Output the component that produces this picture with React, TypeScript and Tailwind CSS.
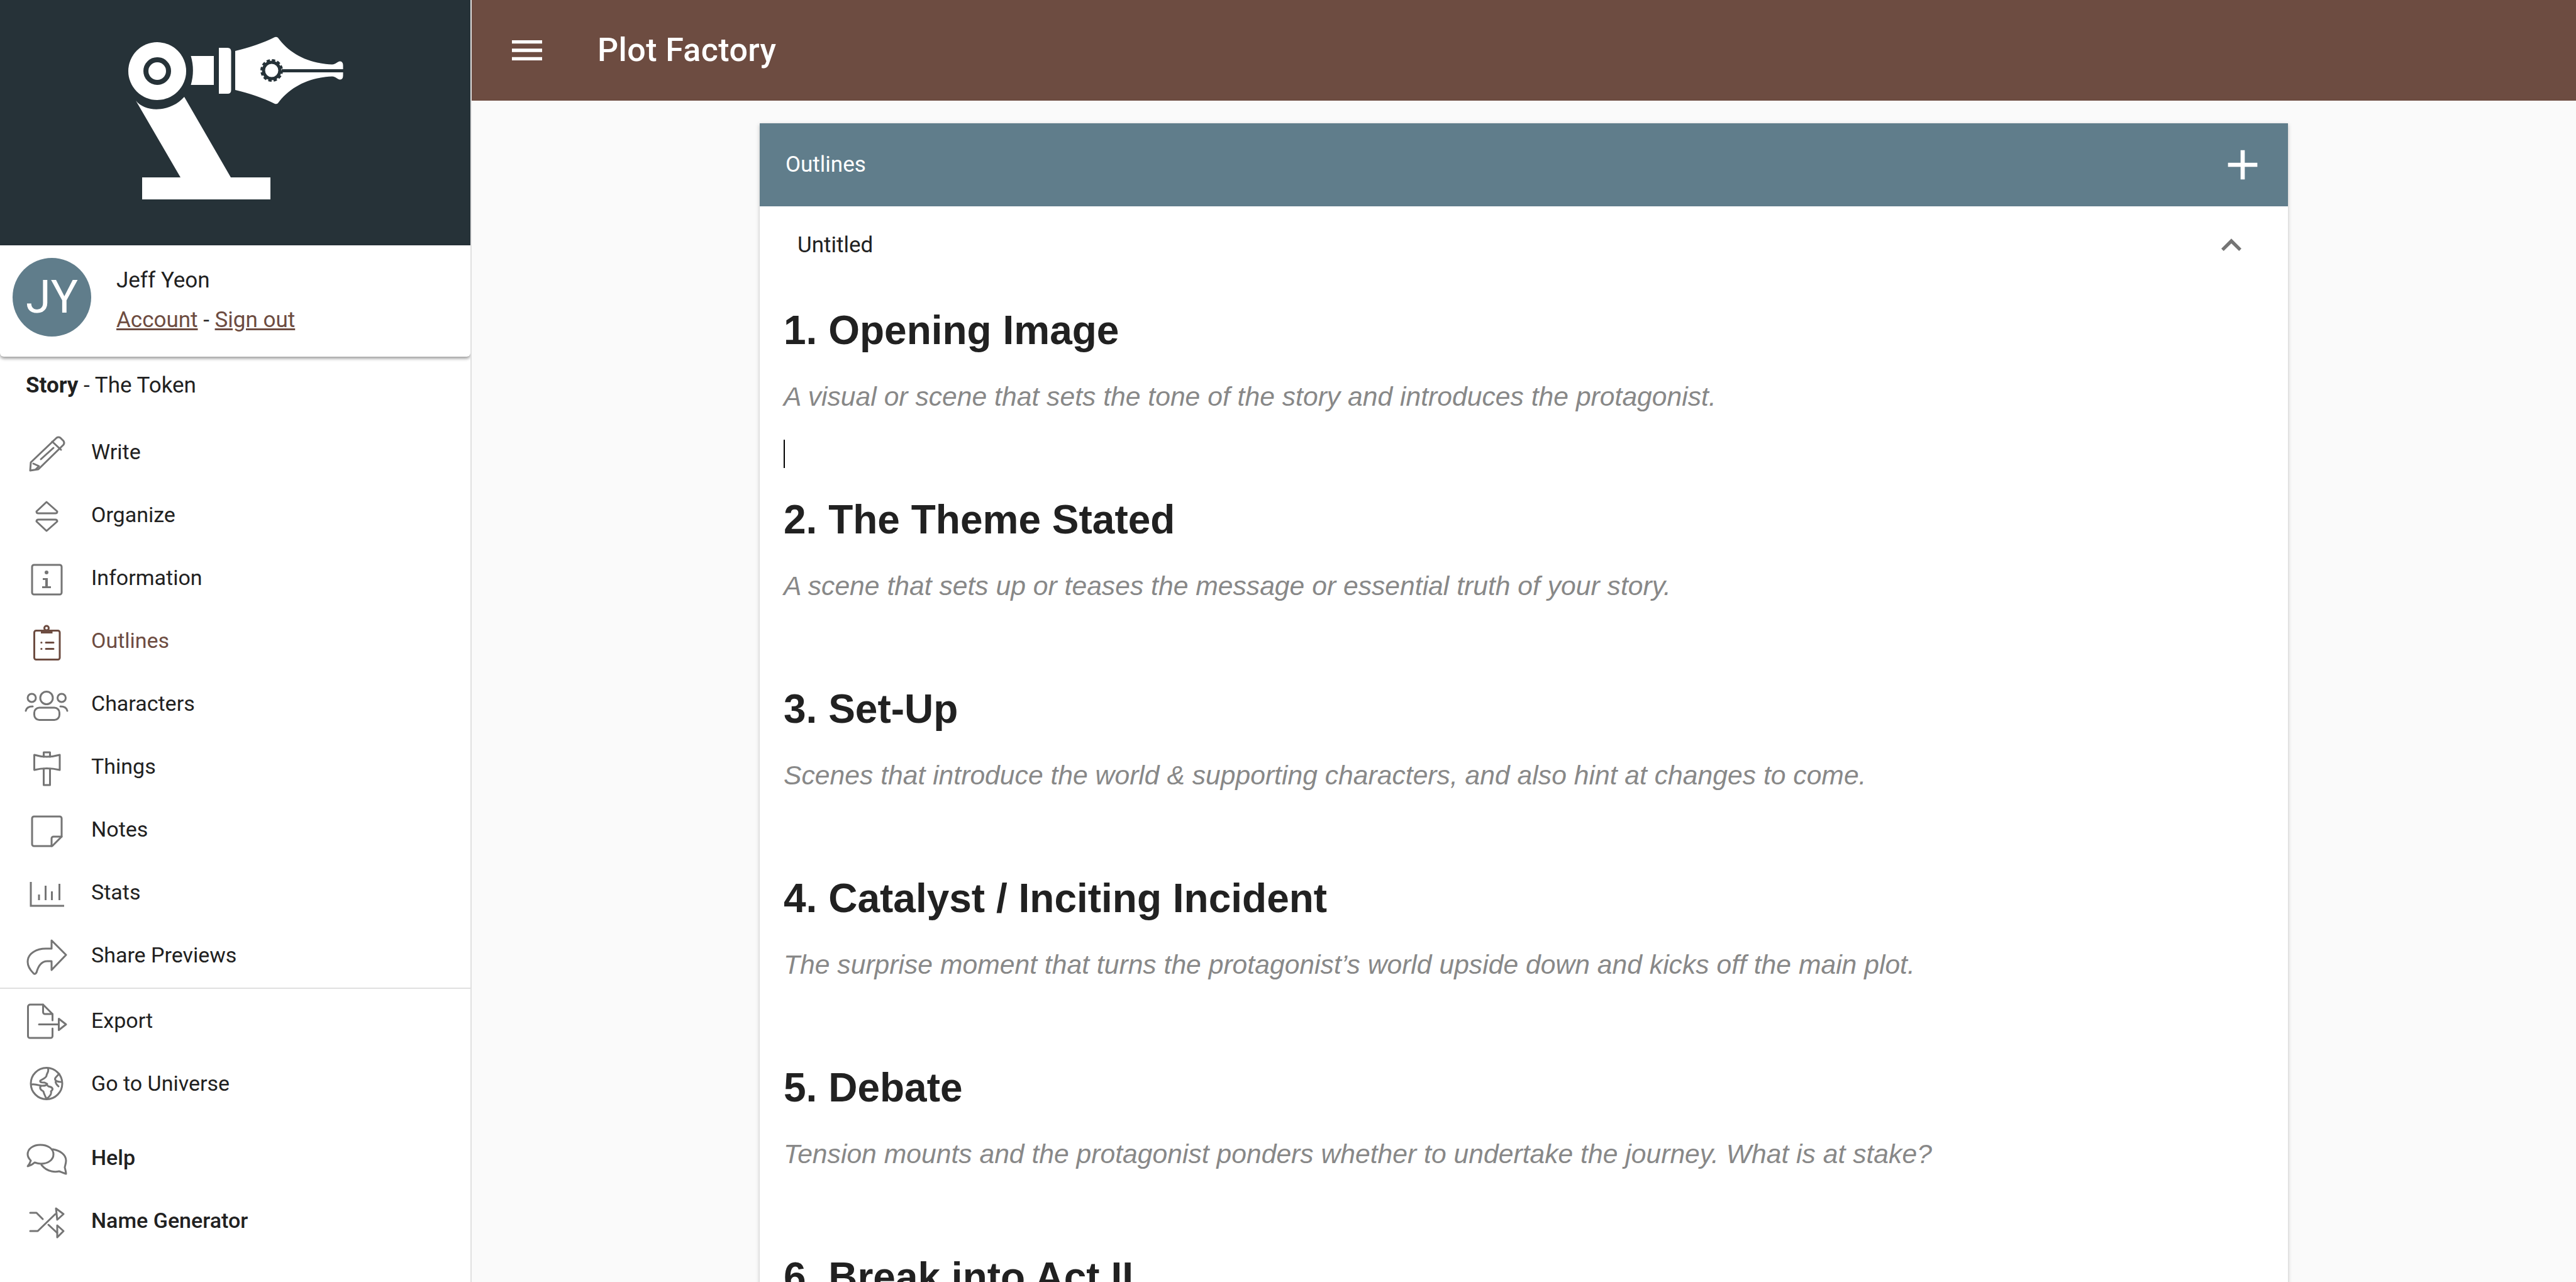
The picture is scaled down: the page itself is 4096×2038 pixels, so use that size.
import React from 'react';

const Icon = ({ children, className = 'text-[#757575]' }: { children: React.ReactNode; className?: string }) => (
  <svg
    viewBox="0 0 66 66"
    fill="none"
    stroke="currentColor"
    strokeWidth="3"
    strokeLinecap="round"
    strokeLinejoin="round"
    className={`w-[66px] h-[66px] overflow-visible shrink-0 ${className}`}
  >
    {children}
  </svg>
);

const Logo = () => (
  <svg viewBox="0 0 750 390" className="w-[750px] h-[390px] block">
    <g fill="#fff">
      <circle cx="250" cy="113" r="46" />
      <path d="M303.5 89H340V135H303.5C308 120 308 104 303.5 89Z" />
      <path d="M348 76H362Q367.500 76 367.500 82V143Q367.500 149 362 149H348Z" />
      <path d="M374 81C395 76 420 68 437 59Q440 58 442 60C460 85 490 101 528 102.500C535 102 537 97 541 97.500Q545.500 98 545.500 104V120Q545.500 126 541 126.500C537 127 535 122 528 121.500C490 123 460 139 442 164Q440 166 437 165C420 156 395 148 374 143Z" />
      <path d="M216 160C232 180 272 178 293 154L367 282H430V317H226V282H287Z" />
    </g>
    <circle cx="250" cy="113" r="18" fill="none" stroke="#263238" strokeWidth="8" />
    <path d="M448 112.500H546" stroke="#263238" strokeWidth="5" />
    <circle cx="432" cy="112" r="15.500" fill="none" stroke="#263238" strokeWidth="5" strokeDasharray="5 3.100" />
    <circle cx="432" cy="112" r="13" fill="none" stroke="#263238" strokeWidth="5" />
  </svg>
);

const icons: Record<string, React.ReactNode> = {
  write: (
    <>
      <path d="M7 63L8 50L49 11Q52 9 55 11L60 16Q62 19 60 22L20 61Z" />
      <path d="M42 17L56 30M24 45L44 27M12 52L21 56L16 61" />
    </>
  ),
  organize: <path d="M33 13L50 28Q50 31 47 31H20Q17 31 17 28ZM20 41H47Q50 41 50 44L33 59L17 44Q17 41 20 41Z" />,
  information: (
    <>
      <rect x="10" y="13" width="47" height="47" rx="3" />
      <circle cx="33" cy="25" r="3" fill="currentColor" stroke="none" />
      <path d="M27 34H35V47H40V50H26V47H31V37H27Z" fill="currentColor" stroke="none" />
    </>
  ),
  outlines: (
    <>
      <rect x="13.500" y="17.500" width="40.500" height="46" rx="3" />
      <circle cx="33" cy="13.500" r="3.500" />
      <path d="M24 19.500H42.500" strokeWidth="5" strokeLinecap="butt" />
      <path d="M32 36.500H44M32 46.500H44M24.700 36.500H25M24.700 46.500H25" />
    </>
  ),
  characters: (
    <>
      <circle cx="33" cy="24.500" r="10" />
      <circle cx="9.500" cy="24.500" r="6.500" />
      <circle cx="57" cy="24.500" r="6.500" />
      <rect x="13.500" y="40" width="40" height="19.500" rx="8" />
      <path d="M0 45C1 40 5 38 11 38M66 45C65 40 61 38 55 38" />
    </>
  ),
  things: (
    <>
      <path d="M13.500 15Q33 21 54 15V39Q33 34 13.500 39Z" />
      <path d="M28.500 18V11H38.500V18M28.500 37V63H38.500V37" />
    </>
  ),
  notes: (
    <>
      <path d="M13 13H54A3 3 0 0 1 57 16V45L42 60H13A3 3 0 0 1 10 57V16A3 3 0 0 1 13 13Z" />
      <path d="M41 60V48A3 3 0 0 1 44 45H57" />
    </>
  ),
  stats: <path d="M8 17V55H61M21 37V46M31.500 23V46M41.500 32V46M53.500 20V46" strokeLinecap="butt" strokeLinejoin="miter" />,
  share: <path d="M41 10L64 33L41 57V43H34C25 43 20 50 17 61Q14 65 12 62C8 58 3 52 3 44C3 30 18 23 32 23H41Z" />,
  export: (
    <>
      <path d="M42.500 33V23L27.500 8H7A3.500 3.500 0 0 0 3.500 11.500V58A3 3 0 0 0 7 61H39A3 3 0 0 0 42.500 58V46" />
      <path d="M27.500 8V20A3 3 0 0 0 30.500 23H42.500M21 39.500H52" />
      <path d="M52.500 30.500L64 39.500L52.500 48.500Z" />
    </>
  ),
  universe: (
    <>
      <circle cx="33" cy="33.500" r="25" />
      <path d="M35 9C38 14 33 17 33 21C32 25 27 26 23 29C22 32 26 32 30 32L34 34C32 38 28 37 24 37C20 36 15 34 9 35" />
      <path d="M24 37C21 41 24 44 28 46C29 50 31 54 33 58C38 54 42 50 40 46C45 42 42 39 36 38L33 35" />
      <path d="M53 18C49 23 44 25 48 29C51 31 57 31 57 31M48 29C46 33 50 36 52 38" />
    </>
  ),
  help: (
    <>
      <path d="M23 13C35 13 44 19 44 28C44 37 35 43 24 43C20 43 17 42 14 41C11 44 7 46 3 47C6 44 7 41 8 38C5 35 3 32 3 28C3 19 12 13 23 13Z" />
      <path d="M43 20C55 22 64 29 64 38C64 43 62 47 62 49C63 53 64 56 64 59C60 58 56 56 53 55C49 56 45 56 41 55C35 54 30 51 25 45" />
    </>
  ),
  generator: (
    <>
      <path d="M7 21H17L27 31M7 50H19L47 23M36 40L50 53" />
      <path d="M48 14L60 23L50 32ZM50 41L60 50L50 60Z" />
    </>
  ),
};

const NavRow = ({ icon, label, active, medium }: { icon: string; label: string; active?: boolean; medium?: boolean }) => (
  <div className="flex items-center h-[100px] pl-[41px]">
    <Icon className={active ? 'text-[#6d4c41]' : 'text-[#757575]'}>{icons[icon]}</Icon>
    <span className={`ml-[38px] text-[34px] ${active ? 'text-[#6d4c41]' : 'text-[#212121]'} ${medium ? 'font-medium' : ''}`}>{label}</span>
  </div>
);

const beats = [
  ['1. Opening Image', 'A visual or scene that sets the tone of the story and introduces the protagonist.'],
  ['2. The Theme Stated', 'A scene that sets up or teases the message or essential truth of your story.'],
  ['3. Set-Up', 'Scenes that introduce the world & supporting characters, and also hint at changes to come.'],
  ['4. Catalyst / Inciting Incident', 'The surprise moment that turns the protagonist’s world upside down and kicks off the main plot.'],
  ['5. Debate', 'Tension mounts and the protagonist ponders whether to undertake the journey. What is at stake?'],
  ['6. Break into Act II', ''],
];

export default function App() {
  return (
    <div className="flex w-[4096px] h-[2038px] overflow-hidden bg-[#fafafa] font-['Roboto',sans-serif]">
      <aside className="w-[750px] shrink-0 bg-white border-r-2 border-[#e0e0e0] overflow-hidden">
        <div className="h-[390px] bg-[#263238]">
          <Logo />
        </div>
        <div className="flex h-[177px] pl-[20px] pt-[20px] rounded-b-[6px] bg-white shadow-[0_3px_5px_rgba(0,0,0,0.4)]">
          <div className="flex items-center justify-center w-[125px] h-[125px] rounded-full bg-[#607d8b] text-white text-[72px]">JY</div>
          <div className="ml-[40px]">
            <div className="text-[35px] leading-[52px] mt-[10px] text-[#212121]">Jeff Yeon</div>
            <div className="text-[35px] leading-[52px] mt-[11px] text-[#212121]">
              <span className="text-[#6d4c41] underline">Account</span> - <span className="text-[#6d4c41] underline">Sign out</span>
            </div>
          </div>
        </div>
        <div className="h-[101px] pl-[41px] pt-[21px] text-[35px] leading-[50px] text-[#212121]">
          <span className="font-bold">Story</span> - The Token
        </div>
        <NavRow icon="write" label="Write" />
        <NavRow icon="organize" label="Organize" />
        <NavRow icon="information" label="Information" />
        <NavRow icon="outlines" label="Outlines" active />
        <NavRow icon="characters" label="Characters" />
        <NavRow icon="things" label="Things" />
        <NavRow icon="notes" label="Notes" />
        <NavRow icon="stats" label="Stats" />
        <NavRow icon="share" label="Share Previews" />
        <div className="h-[2px] mt-[2px] bg-[#e0e0e0]" />
        <NavRow icon="export" label="Export" />
        <NavRow icon="universe" label="Go to Universe" />
        <div className="h-[18px]" />
        <NavRow icon="help" label="Help" medium />
        <NavRow icon="generator" label="Name Generator" medium />
      </aside>

      <main className="flex-1 min-w-0 flex flex-col">
        <header className="flex items-center h-[160px] shrink-0 bg-[#6d4c41] text-white">
          <svg viewBox="0 0 24 24" fill="currentColor" className="w-[64px] h-[64px] ml-[56px]">
            <path d="M3 18h18v-2H3v2zm0-5h18v-2H3v2zm0-7v2h18V6H3z" />
          </svg>
          <span className="ml-[80px] text-[52px] font-medium tracking-[0.4px]">Plot Factory</span>
        </header>

        <div className="w-[2430px] mx-auto mt-[36px] bg-white shadow-[0_2px_6px_rgba(0,0,0,0.25)]">
          <div className="flex items-center justify-between h-[132px] bg-[#607d8b] text-white pl-[41px] pr-[12px]">
            <span className="text-[35px]">Outlines</span>
            <svg viewBox="0 0 24 24" fill="currentColor" className="w-[80px] h-[80px] mr-[20px]">
              <path d="M19 13h-6v6h-2v-6H5v-2h6V5h2v6h6v2z" />
            </svg>
          </div>
          <div className="flex items-center justify-between h-[124px] pl-[60px] pr-[58px] text-[#212121]">
            <span className="text-[35px]">Untitled</span>
            <svg viewBox="0 0 24 24" fill="#757575" className="w-[64px] h-[64px]">
              <path d="M12 8l-6 6 1.41 1.41L12 10.83l4.59 4.58L18 14z" />
            </svg>
          </div>
          <div className="pl-[38px] pt-[35px] font-['Liberation_Sans',sans-serif]">
            {beats.map(([title, hint], i) => (
              <section key={title}>
                <h2 className="h-[76px] mb-[35px] text-[64px] leading-[76px] font-bold text-[#212121]">{title}</h2>
                <p className="h-[64px] mb-[27px] text-[42.67px] leading-[64px] italic text-[#888888]">{hint}</p>
                <div className="h-[64px] mb-[35px] flex items-center">
                  {i === 0 && <div className="w-[2px] h-[45px] bg-black" />}
                </div>
              </section>
            ))}
          </div>
        </div>
      </main>
    </div>
  );
}
